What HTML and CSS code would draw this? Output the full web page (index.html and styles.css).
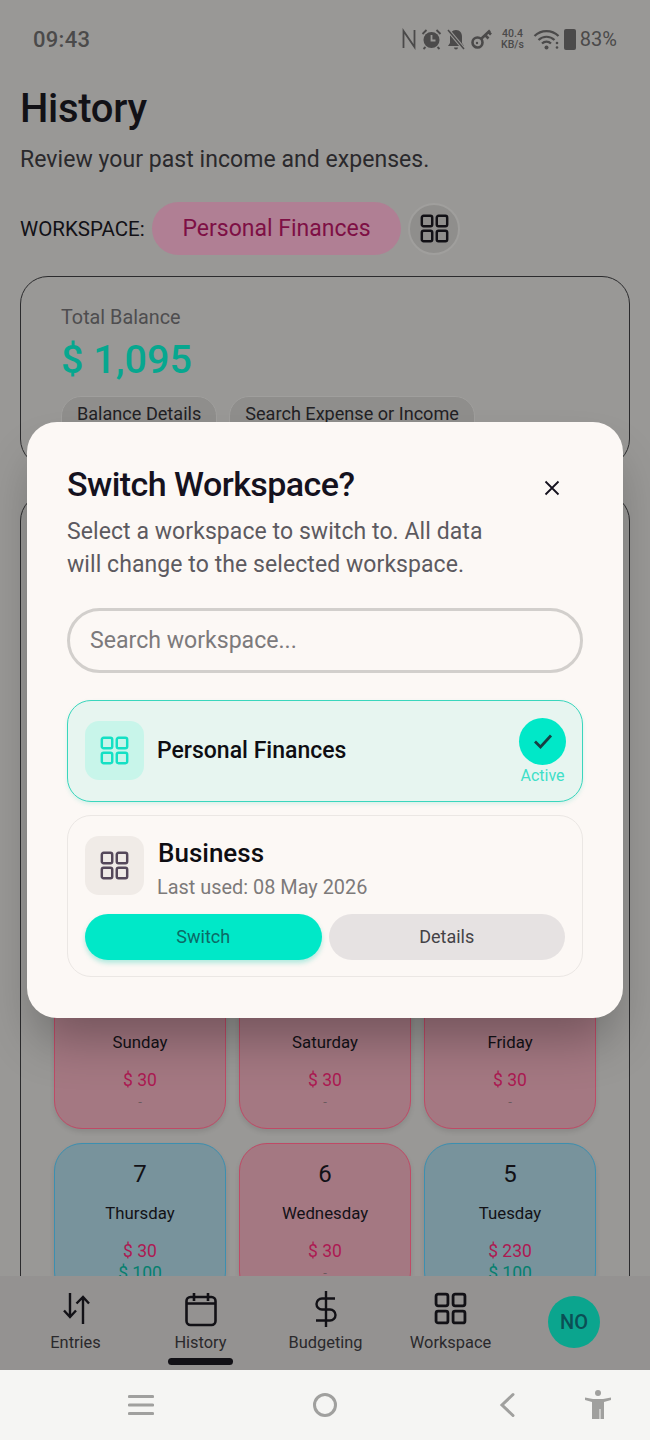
FILE: index.html
```html
<!DOCTYPE html>
<html lang="en">
<head>
<meta charset="UTF-8" />
<meta name="viewport" content="width=device-width, initial-scale=1" />
<title>History</title>
<link rel="stylesheet" href="styles.css">
</head>
<body>

<svg class="sprite" width="0" height="0">
  <symbol id="grid" viewBox="0 0 32 32">
    <rect x="2" y="2" width="11.500" height="11.500" rx="2" />
    <rect x="18.500" y="2" width="11.500" height="11.500" rx="2" />
    <rect x="2" y="18.500" width="11.500" height="11.500" rx="2" />
    <rect x="18.500" y="18.500" width="11.500" height="11.500" rx="2" />
  </symbol>
</svg>

<div class="screen">
  <div class="app">

    <div class="status-bar">
      <span class="clock">09:43</span>
      <div class="status-icons">
        <svg width="16" height="24" viewBox="0 0 16 24"><path d="M2.500 21V4l11 16V3" fill="none" stroke="#4b4a4a" stroke-width="1.800" /></svg>
        <svg width="21" height="24" viewBox="0 0 21 24"><circle cx="10.500" cy="13" r="8" fill="#4b4a4a" /><path d="M1.500 7l4-4M19.500 7l-4-4M4.500 20l-2 2M16.500 20l2 2" fill="none" stroke="#4b4a4a" stroke-width="1.800" /><path d="M10.500 8v5.500h4" fill="none" stroke="#999896" stroke-width="1.800" /></svg>
        <svg width="20" height="24" viewBox="0 0 20 24"><path d="M10 3c4 0 6 3 6 7v6l2 3H2l2-3v-6c0-4 2-7 6-7zM8 20.500h4a2 2 0 0 1-4 0z" fill="#4b4a4a" /><path d="M2 3l16 19" stroke="#999896" stroke-width="3.500" /><path d="M2 3l16 19" stroke="#4b4a4a" stroke-width="1.500" /></svg>
        <svg width="23" height="24" viewBox="0 0 23 24"><circle cx="7.500" cy="15.500" r="5" fill="none" stroke="#4b4a4a" stroke-width="2.600" /><circle cx="7" cy="16" r="1.200" fill="#4b4a4a" /><path d="M11 12L20 3.500M15 8l3.500 3.500M18.500 5l2.500 2.500" fill="none" stroke="#4b4a4a" stroke-width="2.600" /></svg>
        <div class="speed"><span>40.4</span><span>KB/s</span></div>
        <svg width="27" height="22" viewBox="0 0 27 22"><path d="M1.500 8a17 17 0 0 1 24 0M5.500 12a11.500 11.500 0 0 1 16 0M9 15.500a6.500 6.500 0 0 1 9 0" fill="none" stroke="#4b4a4a" stroke-width="2.200" /><circle cx="13.500" cy="19.500" r="2" fill="#4b4a4a" /><circle cx="24" cy="15" r="1.300" fill="#4b4a4a" /><circle cx="24" cy="19.500" r="1.300" fill="#4b4a4a" /></svg>
        <div class="battery"></div>
        <span class="pct">83%</span>
      </div>
    </div>

    <div class="main">
      <h1>History</h1>
      <p class="subtitle">Review your past income and expenses.</p>

      <div class="ws-row">
        <span class="ws-label">WORKSPACE:</span>
        <span class="ws-pill">Personal Finances</span>
        <span class="ws-btn"><svg class="grid-icon" width="29" height="29"><use href="#grid" /></svg></span>
      </div>

      <div class="balance-card">
        <div class="balance-label">Total Balance</div>
        <div class="balance-value">$ 1,095</div>
        <div class="chips">
          <span class="chip">Balance Details</span>
          <span class="chip">Search Expense or Income</span>
        </div>
      </div>

      <div class="calendar">
        <div class="day-grid">
          <div class="day red">
            <div class="num">10</div>
            <div class="name">Sunday</div>
            <div class="out">$ 30</div>
            <div class="none">-</div>
          </div>
          <div class="day red">
            <div class="num">9</div>
            <div class="name">Saturday</div>
            <div class="out">$ 30</div>
            <div class="none">-</div>
          </div>
          <div class="day red">
            <div class="num">8</div>
            <div class="name">Friday</div>
            <div class="out">$ 30</div>
            <div class="none">-</div>
          </div>
          <div class="day blue">
            <div class="num">7</div>
            <div class="name">Thursday</div>
            <div class="out">$ 30</div>
            <div class="in">$ 100</div>
          </div>
          <div class="day red">
            <div class="num">6</div>
            <div class="name">Wednesday</div>
            <div class="out">$ 30</div>
            <div class="none">-</div>
          </div>
          <div class="day blue">
            <div class="num">5</div>
            <div class="name">Tuesday</div>
            <div class="out">$ 230</div>
            <div class="in">$ 100</div>
          </div>
        </div>
      </div>
    </div>

    <div class="tab-bar">
      <div class="tab">
        <svg class="tab-icon" width="36" height="36" viewBox="0 0 36 36"><path d="M12 2v24M6 19.500l6 6.500 6-6.500M25 33V6M18.500 12.500L25 6l6 6.500" fill="none" stroke="#121116" stroke-width="2.400" /></svg>
        <span>Entries</span>
      </div>
      <div class="tab">
        <svg class="tab-icon" width="36" height="36" viewBox="0 0 36 36"><rect x="3.500" y="6" width="29" height="28" rx="4" fill="none" stroke="#121116" stroke-width="2.600" /><path d="M3.500 12.500h29M11 2v8M25 2v8" fill="none" stroke="#121116" stroke-width="2.600" /></svg>
        <span>History</span>
        <i class="tab-mark"></i>
      </div>
      <div class="tab">
        <svg class="tab-icon" width="36" height="36" viewBox="0 0 36 36"><path d="M18 0v36M27 7.500H14a5.500 5.500 0 0 0 0 11h8a5.500 5.500 0 0 1 0 11H8" fill="none" stroke="#121116" stroke-width="2.400" /></svg>
        <span>Budgeting</span>
      </div>
      <div class="tab">
        <svg class="grid-icon tab-grid" width="33" height="33"><use href="#grid" /></svg>
        <span>Workspace</span>
      </div>
      <div class="tab">
        <span class="avatar">NO</span>
      </div>
    </div>
  </div>

  <div class="nav-bar">
    <svg width="26" height="22" viewBox="0 0 26 22"><path d="M1.500 2.500h23M1.500 11h23M1.500 19.500h23" fill="none" stroke="#a0a09e" stroke-width="3.200" stroke-linecap="round" /></svg>
    <svg width="26" height="26" viewBox="0 0 26 26"><circle cx="13" cy="13" r="10.500" fill="none" stroke="#a0a09e" stroke-width="3" /></svg>
    <svg width="18" height="26" viewBox="0 0 18 26"><path d="M15 2.500L4 13l11 10.500" fill="none" stroke="#a0a09e" stroke-width="3" stroke-linecap="round" /></svg>
    <svg width="26" height="30" viewBox="0 0 26 30"><circle cx="13" cy="3" r="3" fill="#a0a09e" /><path d="M0 7.500l8 1.500h10l8-1.500V10l-7 2v17h-3.500V19h-1v10H7V12l-7-2z" fill="#a0a09e" /></svg>
  </div>

  <div class="backdrop">
    <div class="modal">
      <div class="modal-head">
        <h2>Switch Workspace?</h2>
        <svg class="close" width="20" height="20" viewBox="0 0 20 20"><path d="M3.500 3.500l13 13M16.500 3.500l-13 13" fill="none" stroke="#15121e" stroke-width="1.800" /></svg>
      </div>
      <p class="modal-text">Select a workspace to switch to. All data will change to the selected workspace.</p>
      <div class="search">Search workspace...</div>

      <div class="ws-card active">
        <span class="tile"><svg class="grid-icon" width="29" height="29"><use href="#grid" /></svg></span>
        <span class="ws-name">Personal Finances</span>
        <div class="active-mark">
          <span class="check"><svg width="22" height="22" viewBox="0 0 22 22"><path d="M3 11.500l5.500 5.500L19 5.500" fill="none" stroke="#173f43" stroke-width="2.800" /></svg></span>
          <span>Active</span>
        </div>
      </div>

      <div class="ws-card other">
        <div class="ws-top">
          <span class="tile"><svg class="grid-icon" width="29" height="29"><use href="#grid" /></svg></span>
          <div>
            <div class="ws-title">Business</div>
            <div class="ws-used">Last used: 08 May 2026</div>
          </div>
        </div>
        <div class="ws-actions">
          <span class="btn switch">Switch</span>
          <span class="btn details">Details</span>
        </div>
      </div>
    </div>
  </div>
</div>

</body>
</html>
```

FILE: styles.css
```css
* {
  box-sizing: border-box;
}
body {
  margin: 0;
  font-family: Roboto, "Noto Sans", sans-serif;
  background: #999896;
  color: #121116;
}
h1, h2, p {
  margin: 0;
}
.sprite {
  position: absolute;
}
.grid-icon {
  fill: none;
  stroke: currentColor;
  stroke-width: 2.700;
}
.screen {
  position: relative;
  height: 1440px;
  display: flex;
  flex-direction: column;
  overflow: hidden;
}
.app {
  flex: 1;
  min-height: 0;
  display: flex;
  flex-direction: column;
}

/* status bar */
.status-bar {
  height: 78px;
  padding: 0 33px;
  display: flex;
  justify-content: space-between;
  align-items: center;
  color: #4b4a4a;
}
.clock {
  font-size: 22px;
  font-weight: 500;
  letter-spacing: 0.3px;
}
.status-icons {
  display: flex;
  align-items: center;
  gap: 4px;
}
.speed {
  display: flex;
  flex-direction: column;
  align-items: center;
  font-size: 10.500px;
  font-weight: 500;
  line-height: 11px;
  margin: 0 5px 0 4px;
}
.battery {
  width: 12px;
  height: 21px;
  background: #4b4a4a;
  border-radius: 2px;
}
.pct {
  font-size: 20px;
}

/* page head */
.main {
  flex: 1;
  min-height: 0;
  overflow: hidden;
  padding: 0 20px;
}
h1 {
  margin-top: 1px;
  font-size: 40px;
  font-weight: 500;
  line-height: 60px;
  letter-spacing: -0.3px;
}
.subtitle {
  margin-top: 5px;
  font-size: 23px;
  line-height: 32px;
  letter-spacing: 0.05px;
  color: #2a292c;
}
.ws-row {
  margin-top: 26px;
  display: flex;
  align-items: center;
}
.ws-label {
  font-size: 20.500px;
  width: 132px;
  white-space: nowrap;
}
.ws-pill {
  width: 249px;
  height: 53px;
  border-radius: 27px;
  background: #b07f94;
  color: #7e0f45;
  font-size: 23px;
  display: flex;
  align-items: center;
  justify-content: center;
}
.ws-btn {
  width: 52px;
  height: 52px;
  margin-left: 7px;
  border-radius: 50%;
  background: #8f8e8c;
  border: 2px solid #a09f9d;
  display: flex;
  align-items: center;
  justify-content: center;
}

/* balance card */
.balance-card {
  margin-top: 21px;
  height: 191px;
  border: 1.500px solid #2b2b2d;
  border-radius: 28px;
  padding: 29px 40px;
}
.balance-label {
  font-size: 19.800px;
  color: #4e4d4f;
}
.balance-value {
  margin-top: 7px;
  font-size: 39.500px;
  font-weight: 500;
  color: #07a78f;
}
.chips {
  margin-top: 13px;
  display: flex;
  gap: 12px;
}
.chip {
  height: 50px;
  padding: 6px 15px 0;
  border-radius: 20px;
  background: #8f8e8c;
  border: 1.500px solid #a09f9d;
  font-size: 18.100px;
  color: #222124;
}

/* calendar */
.calendar {
  margin-top: 26px;
  border: 1.500px solid #2b2b2d;
  border-radius: 28px 28px 0 0;
  padding: 478px 33px 0;
}
.day-grid {
  display: grid;
  grid-template-columns: repeat(3, 172px);
  gap: 14px 13px;
}
.day {
  height: 157px;
  border-radius: 28px;
  border: 1.500px solid;
  text-align: center;
  padding-top: 14px;
  box-shadow: 0 3px 5px rgba(0, 0, 0, 0.1);
}
.day.red {
  background: #a47882;
  border-color: #bf4a66;
}
.day.blue {
  background: #78939c;
  border-color: #3c8fb0;
}
.num {
  font-size: 24px;
  line-height: 32px;
}
.name {
  margin-top: 11px;
  font-size: 16.800px;
  line-height: 24px;
}
.out {
  margin-top: 15px;
  font-size: 17.500px;
  line-height: 22px;
  color: #ad1a52;
}
.in {
  font-size: 17.500px;
  line-height: 22px;
  color: #067f6e;
}
.none {
  font-size: 13px;
  line-height: 22px;
  color: #6b5a5e;
}

/* bottom tabs */
.tab-bar {
  height: 94px;
  flex: none;
  background: #949291;
  display: grid;
  grid-template-columns: repeat(5, 125px);
  padding-left: 13px;
  position: relative;
}
.tab {
  position: relative;
  display: flex;
  flex-direction: column;
  align-items: center;
  padding-top: 15px;
  font-size: 16.400px;
  color: #2a292c;
}
.tab-icon {
  color: #121116;
  margin-bottom: 6px;
}
.tab-grid {
  color: #121116;
  margin: 1px 0 8px;
}
.tab-mark {
  position: absolute;
  left: 30px;
  right: 30px;
  bottom: 5px;
  height: 7px;
  border-radius: 4px;
  background: #121116;
}
.avatar {
  width: 52px;
  height: 52px;
  margin: 5px 0 0 -3px;
  border-radius: 50%;
  background: #0ba58e;
  color: #0a4f55;
  font-size: 20px;
  font-weight: 500;
  display: flex;
  align-items: center;
  justify-content: center;
}

/* android nav */
.nav-bar {
  height: 70px;
  flex: none;
  background: #f5f5f3;
  display: grid;
  grid-template-columns: 184px 186px 87px 1fr;
  align-items: center;
  padding-left: 128px;
}

/* modal */
.backdrop {
  position: absolute;
  inset: 0;
  display: flex;
  align-items: center;
  justify-content: center;
}
.modal {
  width: 596px;
  height: 596px;
  padding: 40px;
  border-radius: 30px;
  background: #fcf8f5;
  box-shadow: 0 30px 50px -10px rgba(0, 0, 0, 0.3);
}
.modal-head {
  display: flex;
  justify-content: space-between;
  align-items: center;
  padding-right: 21px;
}
h2 {
  font-size: 34px;
  font-weight: 500;
  line-height: 44px;
  letter-spacing: -0.55px;
  color: #15121e;
}
.close {
  margin-top: 8px;
}
.modal-text {
  margin-top: 9px;
  width: 430px;
  font-size: 23px;
  line-height: 33px;
  letter-spacing: 0.07px;
  color: #5c5a60;
}
.search {
  margin-top: 27px;
  height: 65px;
  border: 3px solid #d2cfcc;
  border-radius: 33px;
  padding: 0 0 1px 20px;
  display: flex;
  align-items: center;
  font-size: 23.100px;
  color: #7c7a7c;
}
.ws-card {
  border-radius: 24px;
  border: 1.500px solid #ebe7e4;
}
.ws-card.active {
  margin-top: 27px;
  height: 102px;
  padding: 0 16px 0 17px;
  background: #e7f5f0;
  border-color: #3ad6bd;
  box-shadow: 0 2px 4px rgba(0, 200, 170, 0.15);
  display: flex;
  align-items: center;
  gap: 13px;
}
.tile {
  width: 59px;
  height: 59px;
  flex: none;
  border-radius: 14px;
  display: flex;
  align-items: center;
  justify-content: center;
}
.active .tile {
  background: #c8f5ea;
  color: #14e0c4;
  margin-bottom: 2px;
}
.other .tile {
  background: #f0ebe7;
  color: #55485a;
}
.ws-name {
  flex: 1;
  margin-bottom: 2px;
  font-size: 23px;
  font-weight: 500;
  color: #0e0d12;
}
.active-mark {
  display: flex;
  flex-direction: column;
  align-items: center;
  gap: 1px;
  font-size: 16px;
  color: #3fdfc8;
}
.check {
  width: 47px;
  height: 47px;
  border-radius: 50%;
  background: #00e8c8;
  display: flex;
  align-items: center;
  justify-content: center;
}
.ws-card.other {
  margin-top: 13px;
  height: 162px;
  padding: 20px 17px 0;
  border-bottom-width: 1px;
}
.ws-top {
  display: flex;
  gap: 14px;
}
.ws-title {
  padding-top: 1px;
  font-size: 26px;
  font-weight: 500;
  line-height: 33px;
  color: #0e0d12;
}
.ws-used {
  margin: 6px 0 0 -1px;
  font-size: 19.900px;
  color: #7d7a7a;
}
.ws-actions {
  margin-top: 15px;
  display: grid;
  grid-template-columns: 1fr 1fr;
  gap: 7px;
}
.btn {
  height: 46px;
  padding-bottom: 1px;
  border-radius: 23px;
  font-size: 18px;
  display: flex;
  align-items: center;
  justify-content: center;
}
.switch {
  background: #00e8c8;
  color: #0c6a66;
  box-shadow: 0 3px 5px rgba(0, 200, 170, 0.3);
}
.details {
  background: #e6e2e2;
  color: #444246;
}
```
